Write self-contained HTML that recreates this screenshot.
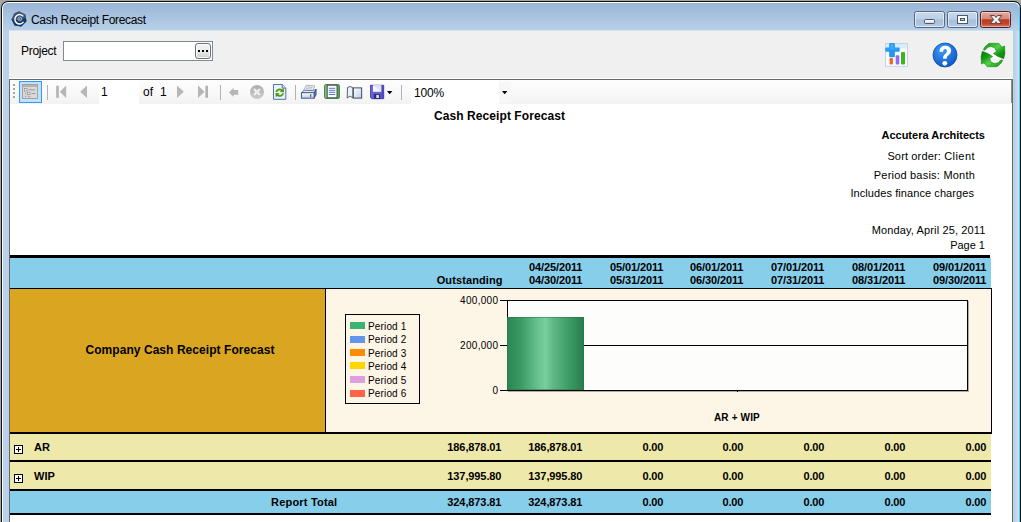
<!DOCTYPE html>
<html><head><meta charset="utf-8">
<style>
html,body{margin:0;padding:0;}
body{width:1021px;height:522px;overflow:hidden;background:#a5a5a5;position:relative;font-family:"Liberation Sans",sans-serif;font-size:11px;color:#000;}
.abs{position:absolute;}
#win{position:absolute;left:1px;top:1px;width:1020px;height:540px;background:#111;border-radius:7px 7px 0 0;}
#win2{position:absolute;left:1px;top:1px;width:1018px;height:540px;background:#fff;border-radius:6px 6px 0 0;}
#frame{position:absolute;left:1px;top:1px;width:1016px;height:540px;border-radius:5px 5px 0 0;background:linear-gradient(#9ab6d6 0px,#a9c3e0 14px,#b9d1ea 28px,#b9d1ea 100%);}
#client{position:absolute;left:9px;top:31px;width:1004px;height:500px;background:#f0f0f0;}
.t{position:absolute;white-space:nowrap;line-height:12px;height:12px;}
.b{font-weight:bold;}
.r{text-align:right;}
.cb{position:absolute;top:11px;width:31px;height:17px;box-sizing:border-box;border:1px solid #566983;border-radius:2.5px;background:linear-gradient(#c9d9ec 0%,#bccfe6 48%,#a6bedb 52%,#b4cae4 100%);box-shadow:inset 0 0 0 1px rgba(255,255,255,.55);}
.sep{position:absolute;top:85px;width:1px;height:15px;background:#b2b2b2;}
.hl{position:absolute;left:10px;width:981px;background:#000;}
.num{position:absolute;white-space:nowrap;line-height:12px;height:12px;font-weight:bold;text-align:right;width:80px;letter-spacing:-0.1px;}
.sw{position:absolute;left:350px;width:15px;height:7px;}
.lg{position:absolute;left:368px;font-size:10px;line-height:10px;white-space:nowrap;letter-spacing:0.15px;}
</style></head><body>
<div id="win"><div id="win2"><div id="frame"></div></div></div>
<div class="abs" style="left:1013px;top:31px;width:6px;height:500px;background:linear-gradient(90deg,#b6cee9,#c3d6ec 60%,#d8e2f0);"></div>
<div class="abs" style="left:1019px;top:6px;width:1px;height:520px;background:#3fd0f5;"></div>
<div class="abs" style="left:9px;top:30px;width:1004px;height:1px;background:#d6e1ee;"></div>
<div id="client"></div>

<!-- title bar -->
<svg class="abs" style="left:11px;top:11px" width="16" height="16" viewBox="0 0 16 16">
<polygon points="8,0.3 14.6,3.6 15.4,10.6 10.2,15.6 3.6,14.6 0.5,8.2 3.2,2.2" fill="#3b5277"/>
<polygon points="0.5,8.2 3.6,14.6 10.2,15.6 15.4,10.6 15,7 9,9.5" fill="#123a63"/>
<path d="M12.3 5.4 A4.7 4.7 0 1 0 12.5 10.9" fill="none" stroke="#fff" stroke-width="1.45"/>
<circle cx="8.8" cy="8" r="1.9" fill="none" stroke="#a9b6cc" stroke-width="0.9"/><circle cx="8.8" cy="8" r="0.7" fill="#c5cede"/>
</svg>
<div class="t" id="title" style="left:31px;top:14px;font-size:12px;letter-spacing:-0.35px;">Cash Receipt Forecast</div>
<div class="cb" style="left:914px;"><div class="abs" style="left:9px;top:7px;width:9px;height:3px;background:linear-gradient(#fff,#dcdcdc);border:1px solid #4a5870;border-radius:1.5px;"></div></div>
<div class="cb" style="left:947px;"><div class="abs" style="left:10px;top:4px;width:5px;height:3px;background:transparent;border:2px solid #fff;outline:1px solid #4a5870;"></div><div class="abs" style="left:12px;top:6px;width:5px;height:3px;box-sizing:border-box;border:1px solid #4a5870;"></div></div>
<div class="cb" style="left:980px;border-color:#5b1f28;background:linear-gradient(#e5aca0 0%,#d68878 45%,#b93a22 52%,#c4492c 80%,#d97e5e 100%);box-shadow:inset 0 0 0 1px rgba(255,255,255,.4);">
<svg class="abs" style="left:8px;top:2px" width="14" height="11" viewBox="0 0 14 11"><path d="M1.3 1.6 L5.5 1.6 L7 3.5 L8.5 1.6 L12.7 1.6 L9.3 5.6 L12.7 9.6 L8.5 9.6 L7 7.7 L5.5 9.6 L1.3 9.6 L4.7 5.6 Z" fill="#f4f4f4" stroke="#4e3f4a" stroke-width="1" stroke-linejoin="round"/></svg>
</div>

<!-- project row -->
<div class="t" id="proj" style="left:21px;top:45px;font-size:12px;letter-spacing:-0.3px;">Project</div>
<div class="abs" style="left:63px;top:41px;width:150px;height:20px;box-sizing:border-box;background:#fff;border:1px solid #7f8a99;"></div>
<div class="abs" style="left:195px;top:43px;width:16px;height:16px;box-sizing:border-box;border:1px solid #707070;border-radius:3px;background:linear-gradient(#f6f6f6,#ebebeb 50%,#cfcfcf);box-shadow:inset 0 0 0 1px rgba(255,255,255,.8);"></div>
<div class="abs" style="left:198px;top:50px;width:2px;height:2px;background:#000;box-shadow:4px 0 0 #000,8px 0 0 #000;"></div>

<!-- right icons -->
<svg class="abs" style="left:884px;top:42px" width="26" height="26" viewBox="0 0 26 26">
<rect x="1.5" y="1.5" width="22" height="22.800" fill="#fbfcfe" stroke="#c6d3e6"/>
<rect x="2" y="2" width="21" height="4.5" fill="#d6eefb"/>
<rect x="5.6" y="16" width="3.3" height="6.5" rx="1" fill="#f8601c"/>
<rect x="11.7" y="13.3" width="3.6" height="9.2" rx="1" fill="#8a6df0"/>
<rect x="17" y="10" width="4" height="12.5" rx="1" fill="#3db51a"/>
<path d="M6.2 1 h3.700 a1 1 0 0 1 1 1 v3.600 h3.800 a1 1 0 0 1 1 1 v2.100 a1 1 0 0 1 -1 1 h-3.800 v4.600 a1 1 0 0 1 -1 1 h-3.700 a1 1 0 0 1 -1 -1 v-4.600 h-2.900 a1 1 0 0 1 -1 -1 v-2.100 a1 1 0 0 1 1 -1 h2.900 v-3.600 a1 1 0 0 1 1 -1z" fill="#2295f2"/><path d="M6.500 2 h3 v4.500 h4.500 v1 h-12 v-1 h4.500z" fill="#55b2fb" opacity="0.7"/>
</svg>
<svg class="abs" style="left:932px;top:42px" width="26" height="26" viewBox="0 0 26 26">
<defs><radialGradient id="hg" cx="40%" cy="30%" r="75%"><stop offset="0" stop-color="#3f9cf5"/><stop offset="1" stop-color="#0b56c4"/></radialGradient></defs>
<circle cx="13" cy="13" r="12" fill="url(#hg)" stroke="#0a4aa8" stroke-width="0.8"/>
<g transform="translate(13.2 13.2) scale(1.27) translate(-13.2 -12.6)"><path d="M8.700 9.800 C8.700 6.600 10.800 5.200 13.300 5.200 C16 5.200 17.800 6.800 17.800 9 C17.800 11.200 16.300 12 15.200 13 C14.500 13.700 14.400 14.300 14.400 15.400 L11.500 15.400 C11.500 13.600 11.800 12.800 12.900 11.800 C13.800 11 14.600 10.400 14.600 9.300 C14.600 8.400 14 7.800 13.100 7.800 C12.100 7.800 11.500 8.500 11.500 9.800 Z" fill="#fff"/>
<circle cx="12.900" cy="19" r="1.900" fill="#fff"/></g>
</svg>
<svg class="abs" style="left:980px;top:42px" width="26" height="26" viewBox="0 0 26 26">
<defs><linearGradient id="rg1" x1="0" y1="0" x2="1" y2="1"><stop offset="0" stop-color="#0f8a0f"/><stop offset="0.45" stop-color="#55d04a"/><stop offset="0.7" stop-color="#169a16"/><stop offset="1" stop-color="#087608"/></linearGradient>
<linearGradient id="rg2" x1="1" y1="1" x2="0" y2="0"><stop offset="0" stop-color="#0f8a0f"/><stop offset="0.45" stop-color="#55d04a"/><stop offset="0.7" stop-color="#169a16"/><stop offset="1" stop-color="#087608"/></linearGradient></defs>
<g opacity="0.85"><path d="M3.17 7.73 L5.12 4.47 L9.03 1.21 L18.80 1.21 L22.06 5.12 L24.66 3.82 L24.99 11.64 L23.69 16.85 L17.50 14.24 L13.40 11.50 L16.30 9.50 L14.90 5.90 L11.10 4.50 L8.00 5.20 L5.00 8.20 Z" fill="#fbfbfb" stroke="#fbfbfb" stroke-width="2.4" stroke-linejoin="round"/><path d="M22.83 18.27 L20.88 21.53 L16.97 24.79 L7.20 24.79 L3.94 20.88 L1.34 22.18 L1.01 14.36 L2.31 9.15 L8.50 11.76 L12.60 14.50 L9.70 16.50 L11.10 20.10 L14.90 21.50 L18.00 20.80 L21.00 17.80 Z" fill="#fbfbfb" stroke="#fbfbfb" stroke-width="2.4" stroke-linejoin="round"/></g>
<circle cx="13" cy="13" r="7" fill="#fcfcfc"/>
<path d="M3.17 7.73 L5.12 4.47 L9.03 1.21 L18.80 1.21 L22.06 5.12 L24.66 3.82 L24.99 11.64 L23.69 16.85 L17.50 14.24 L13.40 11.50 L16.30 9.50 L14.90 5.90 L11.10 4.50 L8.00 5.20 L5.00 8.20 Z" fill="url(#rg1)" stroke="#0a7a0a" stroke-width="0.5" stroke-linejoin="round"/>
<path d="M22.83 18.27 L20.88 21.53 L16.97 24.79 L7.20 24.79 L3.94 20.88 L1.34 22.18 L1.01 14.36 L2.31 9.15 L8.50 11.76 L12.60 14.50 L9.70 16.50 L11.10 20.10 L14.90 21.50 L18.00 20.80 L21.00 17.80 Z" fill="url(#rg2)" stroke="#0a7a0a" stroke-width="0.5" stroke-linejoin="round"/>
</svg>

<!-- viewer -->
<div class="abs" style="left:9px;top:78px;width:1004px;height:1px;background:#fff;"></div>
<div class="abs" style="left:9px;top:79px;width:1004px;height:460px;background:#fff;border-left:1px solid #696969;border-top:1px solid #696969;border-right:1px solid #696969;box-sizing:border-box;"></div>
<div class="abs" id="tb" style="left:10px;top:80px;width:1001px;height:24px;background:linear-gradient(#fdfdfd,#f9f9f9 50%,#f2f2f2);"></div>
<div class="abs" style="left:1011px;top:80px;width:1px;height:23px;background:#8f8f8f;"></div>
<!-- gripper -->
<div class="abs" style="left:13px;top:84px;width:2px;height:2px;background:#a6a6a6;box-shadow:0 4px 0 #a6a6a6,0 8px 0 #a6a6a6,0 12px 0 #a6a6a6;"></div>
<!-- docmap button -->
<div class="abs" style="left:19px;top:81px;width:23px;height:22px;box-sizing:border-box;border:1px solid #3399ff;background:#c2e0ff;"></div>
<svg class="abs" style="left:22px;top:84px" width="16" height="15" viewBox="0 0 16 15">
<rect x="0.500" y="0.500" width="15" height="14" fill="#d9d9d9" stroke="#a2a2a2"/>
<rect x="1" y="1" width="14" height="2" fill="#b4b4b4"/>
<rect x="2.500" y="4.500" width="2.500" height="2.500" fill="#f4f4f4" stroke="#8c8c8c" stroke-width="0.7"/>
<rect x="6.500" y="5.300" width="6.500" height="1" fill="#9a9a9a"/>
<rect x="5.500" y="8.200" width="2.500" height="2.500" fill="#f4f4f4" stroke="#8c8c8c" stroke-width="0.7"/>
<rect x="9.500" y="9" width="4" height="1" fill="#9a9a9a"/>
<rect x="3" y="8.800" width="1" height="1" fill="#8c8c8c"/><rect x="3" y="11.800" width="1" height="1" fill="#8c8c8c"/>
<rect x="5.500" y="12" width="3" height="1.500" fill="#b4b4b4"/>
</svg>
<div class="sep" style="left:47px;"></div>
<!-- nav -->
<svg class="abs" style="left:55px;top:85px" width="13" height="14" viewBox="0 0 13 14"><rect x="1.200" y="0.800" width="2.600" height="12" fill="#b2b2b2"/><polygon points="11.200,0.400 11.200,13 4.800,6.700" fill="#b6b6b6"/></svg>
<svg class="abs" style="left:79px;top:85px" width="10" height="14" viewBox="0 0 10 14"><polygon points="8,0.4 8,13 1.200,6.700" fill="#b6b6b6"/></svg>
<div class="abs" style="left:99px;top:80px;width:40px;height:25px;background:#fff;"></div>
<div class="t" style="left:101px;top:86px;font-size:12px;">1</div>
<div class="t" style="left:143px;top:86px;font-size:12px;">of</div>
<div class="t" style="left:160px;top:86px;font-size:12px;">1</div>
<svg class="abs" style="left:175px;top:85px" width="10" height="14" viewBox="0 0 10 14"><polygon points="2,0.4 2,13 8.800,6.700" fill="#b6b6b6"/></svg>
<svg class="abs" style="left:196px;top:85px" width="13" height="14" viewBox="0 0 13 14"><rect x="9.400" y="0.800" width="2.600" height="12" fill="#b2b2b2"/><polygon points="2,0.400 2,13 8.600,6.700" fill="#b6b6b6"/></svg>
<div class="sep" style="left:220px;"></div>
<svg class="abs" style="left:228px;top:87px" width="11" height="10" viewBox="0 0 11 10"><polygon points="1,5.400 5.600,0.800 5.600,3 10.200,3 10.200,7.700 5.600,7.700 5.600,10" fill="#b6b6b6"/></svg>
<svg class="abs" style="left:249px;top:84px" width="16" height="16" viewBox="0 0 16 16"><defs><linearGradient id="sg" x1="0" y1="0" x2="0" y2="1"><stop offset="0" stop-color="#adadad"/><stop offset="1" stop-color="#cbcbcb"/></linearGradient></defs><circle cx="8" cy="8" r="7" fill="url(#sg)"/><path d="M5 5 L11 11 M11 5 L5 11" stroke="#eeeeee" stroke-width="2.300"/></svg>
<!-- refresh doc -->
<svg class="abs" style="left:272px;top:84px" width="16" height="16" viewBox="0 0 16 16">
<path d="M1.500 0.500 H10.200 L13.800 4.100 V15.300 H1.500 Z" fill="#edf3fb" stroke="#4f74a8"/>
<path d="M10.200 0.500 V4.100 H13.800" fill="#c9dbf0" stroke="#4f74a8"/>
<path d="M3.400 8 A4.300 4.300 0 0 1 10.300 5.400 L11.800 4 L12 8.300 L7.800 8 L9.100 6.700 A2.500 2.500 0 0 0 5.300 8 Z" fill="#4a9a10"/>
<path d="M12.100 9.300 A4.300 4.300 0 0 1 5.200 11.900 L3.700 13.300 L3.500 9 L7.700 9.300 L6.400 10.600 A2.500 2.500 0 0 0 10.200 9.300 Z" fill="#4a9a10"/>
</svg>
<div class="sep" style="left:295px;"></div>
<!-- printer -->
<svg class="abs" style="left:300px;top:84px" width="17" height="16" viewBox="0 0 17 16">
<defs><linearGradient id="pf" x1="0" y1="0" x2="0" y2="1"><stop offset="0" stop-color="#ffffff"/><stop offset="1" stop-color="#b9cbe6"/></linearGradient></defs>
<path d="M6.3 1.2 L14.8 1.9 L12.4 7 L3.6 6.6 Z" fill="#f1f2f4" stroke="#9098a8" stroke-width="0.7"/>
<path d="M6.6 3 L12.6 3.4 M5.8 4.6 L11.8 5" stroke="#a9b0bd" stroke-width="0.8"/>
<path d="M1.4 8.7 L4.3 6.3 L12.6 6.6 L16.1 5.4 L14.1 8.7 Z" fill="#e9eef6" stroke="#3f5f95" stroke-width="0.8" stroke-linejoin="round"/>
<path d="M14.1 8.700 L16.1 5.300 L16.1 10.800 L14.1 14.200 Z" fill="#4d7dbd" stroke="#2f4f85" stroke-width="0.8" stroke-linejoin="round"/>
<rect x="1.4" y="8.700" width="12.700" height="5.500" fill="url(#pf)" stroke="#2f4f85" stroke-width="0.9"/>
<rect x="10" y="11.200" width="1.300" height="1.600" fill="#d02020"/><rect x="10" y="10.100" width="1.300" height="1.100" fill="#2a9a2a"/>
</svg>
<!-- layout -->
<svg class="abs" style="left:324px;top:84px" width="16" height="15" viewBox="0 0 16 15">
<rect x="0.5" y="0.5" width="15" height="14" rx="1.600" fill="#7fb879" stroke="#4b8f46"/>
<rect x="13.2" y="1" width="2" height="13" fill="#5a9e55"/>
<rect x="3.2" y="1.200" width="9.800" height="12.600" fill="#fbfcff" stroke="#3c4450" stroke-width="0.9"/>
<path d="M4.8 4.300 H11.300 M4.8 6.300 H11.300 M4.8 8.300 H11.300 M4.8 10.500 H11.300" stroke="#5f79c4" stroke-width="1"/>
</svg>
<!-- page setup -->
<svg class="abs" style="left:346px;top:85px" width="17" height="15" viewBox="0 0 17 15">
<defs><linearGradient id="pg" x1="0" y1="0" x2="1" y2="1"><stop offset="0" stop-color="#ffffff"/><stop offset="1" stop-color="#b7cdf0"/></linearGradient></defs>
<rect x="7.300" y="2.900" width="8.400" height="10.200" fill="url(#pg)" stroke="#3a3a3a" stroke-width="0.9"/>
<path d="M1.200 13 L1.500 2.600 Q4 0.400 6.800 2.600 L6.800 13 L4 11 Z" fill="#eef1f5" stroke="#46505e" stroke-width="0.9" stroke-linejoin="round"/>
</svg>
<!-- save -->
<svg class="abs" style="left:370px;top:84px" width="15" height="16" viewBox="0 0 15 16">
<path d="M0.4 1.300 H13.700 V14.700 H1.800 L0.4 13.300 Z" fill="#6560d8" stroke="#3f3aa6" stroke-width="0.9"/>
<rect x="11.600" y="1.800" width="1.700" height="12.400" fill="#4a45b4"/>
<rect x="2.900" y="1.300" width="8.300" height="6.500" fill="#f3f5fb"/>
<path d="M2.900 1.300 H11.200 V7.800 Z" fill="#dfe3f2"/>
<rect x="3.900" y="10.200" width="6.300" height="4.500" fill="#2c2a60"/>
<rect x="6.300" y="11" width="2.600" height="3" fill="#e6e6f2"/>
</svg>
<svg class="abs" style="left:387px;top:91px" width="6" height="4" viewBox="0 0 6 4"><polygon points="0,0 5.400,0 2.700,3.200" fill="#000"/></svg>
<div class="sep" style="left:401px;"></div>
<div class="abs" style="left:411px;top:80px;width:88px;height:25px;background:#fff;"></div>
<div class="abs" style="left:499px;top:82px;width:12px;height:21px;background:#f7f7f7;"></div>
<div class="t" style="left:414px;top:87px;font-size:12px;letter-spacing:-0.2px;">100%</div>
<svg class="abs" style="left:502px;top:91px" width="6" height="4" viewBox="0 0 6 4"><polygon points="0,0 5.400,0 2.700,3.200" fill="#000"/></svg>

<!-- report -->
<div class="t b" id="rtitle" style="left:300px;width:399px;text-align:center;top:109px;font-size:12px;line-height:14px;letter-spacing:0.08px;">Cash Receipt Forecast</div>
<div class="t b r" style="right:36px;top:129px;">Accutera Architects</div>
<div class="t r" style="right:80px;top:150px;letter-spacing:0.15px;">Sort order:</div><div class="t r" style="right:46px;top:150px;letter-spacing:0.45px;">Client</div>
<div class="t r" style="right:81px;top:169px;letter-spacing:0.2px;">Period basis:</div><div class="t r" style="right:46px;top:169px;letter-spacing:0.2px;">Month</div>
<div class="t r" style="right:47px;top:187px;letter-spacing:0.08px;">Includes finance charges</div>
<div class="t r" style="right:35.5px;top:224px;letter-spacing:0.13px;">Monday, April 25, 2011</div>
<div class="t r" style="right:36px;top:239px;">Page 1</div>

<!-- table -->
<div class="hl" style="top:255px;height:3px;width:980px;"></div>
<div class="abs" style="left:10px;top:258px;width:981px;height:30px;background:#87ceeb;"></div>
<div class="hl" style="top:288px;height:1px;width:982px;"></div>
<div class="abs" style="left:10px;top:289px;width:315px;height:143px;background:#daa520;"></div>
<div class="abs" style="left:325px;top:289px;width:1px;height:143px;background:#000;"></div>
<div class="abs" style="left:326px;top:289px;width:665px;height:143px;background:#fdf5e6;"></div>
<div class="abs" style="left:991px;top:289px;width:1px;height:145px;background:#000;"></div>
<div class="hl" style="top:432px;height:2px;width:982px;"></div>
<div class="abs" style="left:10px;top:434px;width:981px;height:26px;background:#eee8aa;"></div>
<div class="hl" style="top:460px;height:2px;"></div>
<div class="abs" style="left:10px;top:462px;width:981px;height:27px;background:#eee8aa;"></div>
<div class="hl" style="top:489px;height:2px;"></div>
<div class="abs" style="left:10px;top:491px;width:981px;height:22px;background:#87ceeb;"></div>
<div class="hl" style="top:513px;height:2px;"></div>

<!-- header text -->
<div class="num" style="left:422.6px;top:274px;letter-spacing:0.1px;">Outstanding</div>
<div class="num" style="left:502.4px;top:261px;">04/25/2011</div><div class="num" style="left:502.4px;top:274px;">04/30/2011</div>
<div class="num" style="left:583.4px;top:261px;">05/01/2011</div><div class="num" style="left:583.4px;top:274px;">05/31/2011</div>
<div class="num" style="left:663.4px;top:261px;">06/01/2011</div><div class="num" style="left:663.4px;top:274px;">06/30/2011</div>
<div class="num" style="left:744.4px;top:261px;">07/01/2011</div><div class="num" style="left:744.4px;top:274px;">07/31/2011</div>
<div class="num" style="left:825.4px;top:261px;">08/01/2011</div><div class="num" style="left:825.4px;top:274px;">08/31/2011</div>
<div class="num" style="left:906.4px;top:261px;">09/01/2011</div><div class="num" style="left:906.4px;top:274px;">09/30/2011</div>

<!-- gold title -->
<div class="t b" style="left:10px;width:315px;text-align:center;top:343px;font-size:12px;line-height:14px;padding-left:25px;box-sizing:border-box;letter-spacing:0.06px;">Company Cash Receipt Forecast</div>

<!-- legend -->
<div class="abs" style="left:345px;top:314px;width:75px;height:90px;box-sizing:border-box;border:1px solid #000;"></div>
<div class="sw" style="top:322px;background:#3cb371;"></div><div class="lg" style="top:322px;">Period 1</div>
<div class="sw" style="top:336px;background:#6495ed;"></div><div class="lg" style="top:335px;">Period 2</div>
<div class="sw" style="top:349px;background:#ff8c00;"></div><div class="lg" style="top:349px;">Period 3</div>
<div class="sw" style="top:362px;background:#ffd700;"></div><div class="lg" style="top:362px;">Period 4</div>
<div class="sw" style="top:376px;background:#dda0dd;"></div><div class="lg" style="top:376px;">Period 5</div>
<div class="sw" style="top:390px;background:#ff6347;"></div><div class="lg" style="top:389px;">Period 6</div>

<!-- chart -->
<div class="abs" style="left:507px;top:300px;width:461px;height:91px;box-sizing:border-box;background:#fdfdfc;border:1px solid #000;box-shadow:1px 1px 0 rgba(0,0,0,0.3);"></div>
<div class="abs" style="left:507px;top:345px;width:461px;height:1px;background:#000;"></div>
<div class="abs" style="left:500px;top:300px;width:7px;height:1px;background:#000;"></div>
<div class="abs" style="left:500px;top:345px;width:7px;height:1px;background:#000;"></div>
<div class="abs" style="left:500px;top:390px;width:7px;height:1px;background:#000;"></div>
<div class="abs" style="left:737px;top:391px;width:1px;height:1px;background:#000;"></div>
<div class="abs" style="left:507px;top:317px;width:77px;height:73px;box-shadow:inset 0 0 0 0.5px #2a6e48;background:linear-gradient(90deg,#2a8553 0%,#3a9a63 18%,#6cc593 42%,#77cf9d 50%,#5fb885 60%,#3a9a63 82%,#277d4d 100%);"></div>
<div class="abs" style="left:507px;top:300px;width:1px;height:17px;background:#000;"></div>
<div class="lg r" style="left:440px;width:58.3px;top:296px;text-align:right;letter-spacing:0.3px;">400,000</div>
<div class="lg r" style="left:440px;width:58.3px;top:341px;text-align:right;letter-spacing:0.3px;">200,000</div>
<div class="lg r" style="left:440px;width:58.3px;top:386px;text-align:right;letter-spacing:0.3px;">0</div>
<div class="lg b" style="left:714px;top:413px;letter-spacing:0.15px;">AR + WIP</div>

<!-- rows -->
<svg class="abs" style="left:14px;top:445px" width="9" height="9" viewBox="0 0 9 9"><rect x="0.500" y="0.500" width="8" height="8" fill="#fff" stroke="#000"/><path d="M2 4.500 H7 M4.500 2 V7" stroke="#000"/></svg>
<svg class="abs" style="left:14px;top:474px" width="9" height="9" viewBox="0 0 9 9"><rect x="0.500" y="0.500" width="8" height="8" fill="#fff" stroke="#000"/><path d="M2 4.500 H7 M4.500 2 V7" stroke="#000"/></svg>
<div class="t b" style="left:34px;top:441px;">AR</div>
<div class="t b" style="left:34px;top:470px;">WIP</div>
<div class="t b" style="left:271px;top:496px;letter-spacing:0.2px;">Report Total</div>

<div class="num" style="left:421.4px;top:441px;">186,878.01</div><div class="num" style="left:502.4px;top:441px;">186,878.01</div>
<div class="num" style="left:583.4px;top:441px;">0.00</div><div class="num" style="left:663.4px;top:441px;">0.00</div><div class="num" style="left:744.4px;top:441px;">0.00</div><div class="num" style="left:825.4px;top:441px;">0.00</div><div class="num" style="left:906.4px;top:441px;">0.00</div>
<div class="num" style="left:421.4px;top:470px;">137,995.80</div><div class="num" style="left:502.4px;top:470px;">137,995.80</div>
<div class="num" style="left:583.4px;top:470px;">0.00</div><div class="num" style="left:663.4px;top:470px;">0.00</div><div class="num" style="left:744.4px;top:470px;">0.00</div><div class="num" style="left:825.4px;top:470px;">0.00</div><div class="num" style="left:906.4px;top:470px;">0.00</div>
<div class="num" style="left:421.4px;top:496px;">324,873.81</div><div class="num" style="left:502.4px;top:496px;">324,873.81</div>
<div class="num" style="left:583.4px;top:496px;">0.00</div><div class="num" style="left:663.4px;top:496px;">0.00</div><div class="num" style="left:744.4px;top:496px;">0.00</div><div class="num" style="left:825.4px;top:496px;">0.00</div><div class="num" style="left:906.4px;top:496px;">0.00</div>
</body></html>
